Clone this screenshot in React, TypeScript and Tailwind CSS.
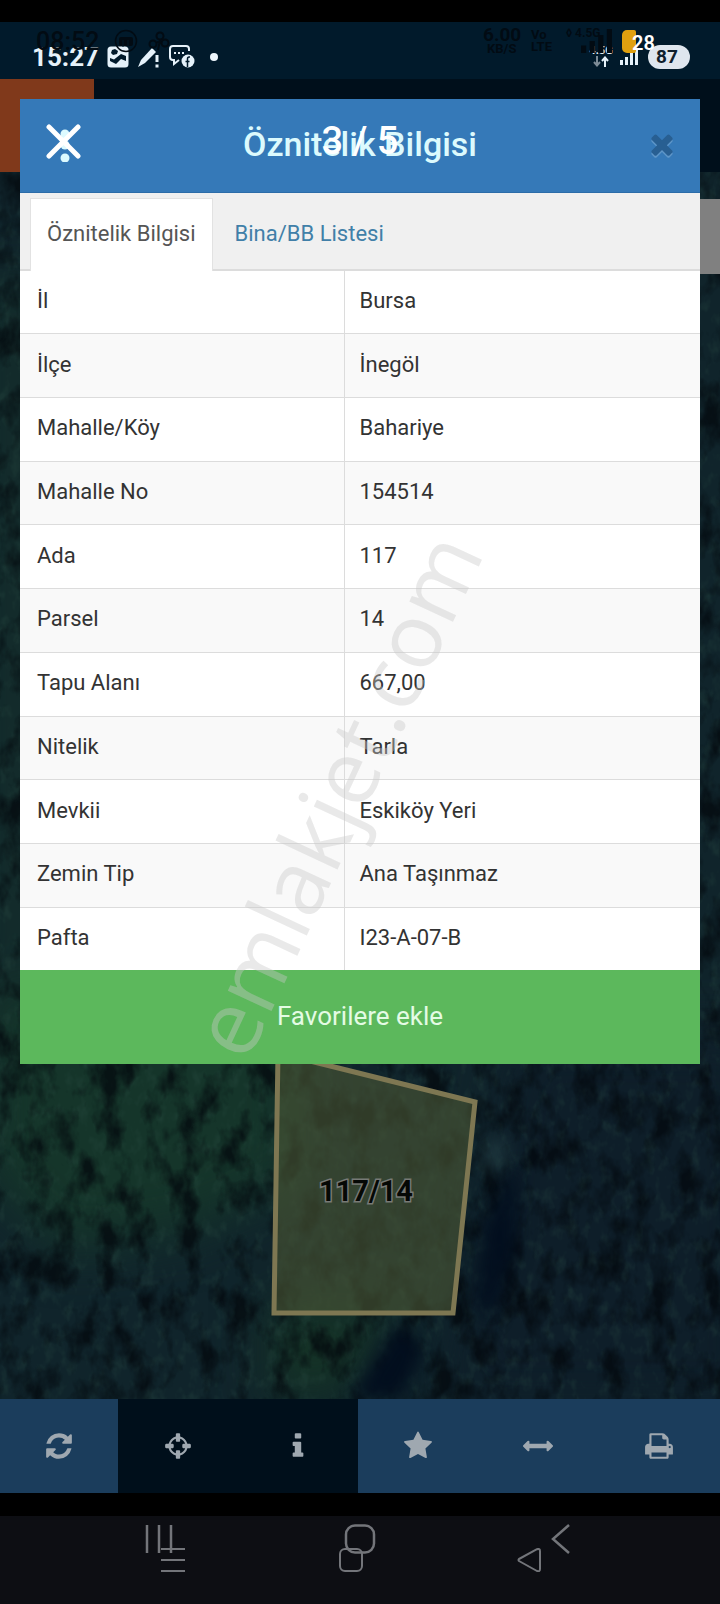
import type { ReactNode } from "react";

const attributes: [string, string][] = [
  ["İl", "Bursa"],
  ["İlçe", "İnegöl"],
  ["Mahalle/Köy", "Bahariye"],
  ["Mahalle No", "154514"],
  ["Ada", "117"],
  ["Parsel", "14"],
  ["Tapu Alanı", "667,00"],
  ["Nitelik", "Tarla"],
  ["Mevkii", "Eskiköy Yeri"],
  ["Zemin Tip", "Ana Taşınmaz"],
  ["Pafta", "I23-A-07-B"],
];

const ICONS = {
  refresh:
    "M1639 1056q0 5-1 7-64 268-268 434.5t-478 166.5q-146 0-282.5-55t-243.5-157l-129 129q-19 19-45 19t-45-19-19-45v-448q0-26 19-45t45-19h448q26 0 45 19t19 45-19 45l-137 137q71 66 161 102t187 36q134 0 250-65t186-179q11-17 53-117 8-23 30-23h192q13 0 22.5 9.5t9.5 22.5zm25-800v448q0 26-19 45t-45 19h-448q-26 0-45-19t-19-45 19-45l138-138q-148-137-349-137-134 0-250 65t-186 179q-11 17-53 117-8 23-30 23h-199q-13 0-22.5-9.5t-9.5-22.5v-7q65-268 270-434.5t480-166.5q146 0 284 55.5t245 156.5l130-129q19-19 45-19t45 19 19 45z",
  crosshairs:
    "M1325 1024h-109q-26 0-45-19t-19-45v-128q0-26 19-45t45-19h109q-32-108-112.5-188.5t-188.5-112.5v109q0 26-19 45t-45 19h-128q-26 0-45-19t-19-45v-109q-108 32-188.5 112.5t-112.5 188.5h109q26 0 45 19t19 45v128q0 26-19 45t-45 19h-109q32 108 112.5 188.5t188.5 112.5v-109q0-26 19-45t45-19h128q26 0 45 19t19 45v109q108-32 188.5-112.5t112.5-188.5zm339-192v128q0 26-19 45t-45 19h-143q-37 161-154.5 278.5t-278.5 154.5v143q0 26-19 45t-45 19h-128q-26 0-45-19t-19-45v-143q-161-37-278.5-154.5t-154.5-278.5h-143q-26 0-45-19t-19-45v-128q0-26 19-45t45-19h143q37-161 154.5-278.5t278.5-154.5v-143q0-26 19-45t45-19h128q26 0 45 19t19 45v143q161 37 278.5 154.5t154.5 278.5h143q26 0 45 19t19 45z",
  info: "M1216 1344v128q0 26-19 45t-45 19h-512q-26 0-45-19t-19-45v-128q0-26 19-45t45-19h64v-384h-64q-26 0-45-19t-19-45v-128q0-26 19-45t45-19h384q26 0 45 19t19 45v576h64q26 0 45 19t19 45zm-128-1152v192q0 26-19 45t-45 19h-256q-26 0-45-19t-19-45v-192q0-26 19-45t45-19h256q26 0 45 19t19 45z",
  star: "M1728 647q0 22-26 48l-363 354 86 500q1 7 1 20 0 21-10.5 35.5t-30.5 14.5q-19 0-40-12l-449-236-449 236q-22 12-40 12-21 0-31.5-14.5t-10.5-35.5q0-6 2-20l86-500-364-354q-25-27-25-48 0-37 56-46l502-73 225-455q19-41 49-41t49 41l225 455 502 73q56 9 56 46z",
  arrows:
    "M1792 896q0 26-19 45l-256 256q-19 19-45 19t-45-19-19-45v-128h-1024v128q0 26-19 45t-45 19-45-19l-256-256q-19-19-19-45t19-45l256-256q19-19 45-19t45 19 19 45v128h1024v-128q0-26 19-45t45-19 45 19l256 256q19 19 19 45z",
  print:
    "M448 1536h896v-256h-896v256zm0-640h896v-384h-160q-40 0-68-28t-28-68v-160h-640v640zm1152 64q0-26-19-45t-45-19-45 19-19 45 19 45 45 19 45-19 19-45zm128 0v416q0 13-9.5 22.5t-22.5 9.5h-224v160q0 40-28 68t-68 28h-960q-40 0-68-28t-28-68v-160h-224q-13 0-22.5-9.5t-9.5-22.5v-416q0-79 56.5-135.5t135.5-56.5h64v-544q0-40 28-68t68-28h672q40 0 88 20t76 48l152 152q28 28 48 76t20 88v256h64q79 0 135.5 56.5t56.5 135.5z",
  times:
    "M1490 1322q0 40-28 68l-136 136q-28 28-68 28t-68-28l-294-294-294 294q-28 28-68 28t-68-28l-136-136q-28-28-28-68t28-68l294-294-294-294q-28-28-28-68t28-68l136-136q28-28 68-28t68 28l294 294 294-294q28-28 68-28t68 28l136 136q28 28 28 68t-28 68l-294 294 294 294q28 28 28 68z",
};

function Icon({ name, className }: { name: keyof typeof ICONS; className: string }) {
  return (
    <svg viewBox="0 0 1792 1792" fill="currentColor" className={className} aria-hidden="true">
      <path d={ICONS[name]} />
    </svg>
  );
}

function SignalBars({ className }: { className: string }) {
  return (
    <svg viewBox="0 0 18 16" fill="currentColor" preserveAspectRatio="none" className={className} aria-hidden="true">
      <rect x="0" y="11" width="3" height="5" />
      <rect x="5" y="8" width="3" height="8" />
      <rect x="10" y="4" width="3" height="12" />
      <rect x="15" y="0" width="3" height="16" />
    </svg>
  );
}

function StatusBar() {
  return (
    <div className="relative h-[57px] bg-[#011a2b]">
      {/* Faded bar of the viewer underneath */}
      <div className="absolute inset-0 flex items-center justify-between pr-[65px] pb-[19px] pl-9 text-[#020b13]">
        <div className="flex items-center">
          <span className="w-[78px] text-[25px] leading-none font-medium">08:52</span>
          <svg viewBox="0 0 24 24" className="size-6" aria-hidden="true">
            <circle cx="12" cy="12" r="10.5" fill="none" stroke="currentColor" strokeWidth="1.5" />
            <rect x="5" y="8" width="14" height="9" rx="2" fill="currentColor" />
            <path d="M9 18v-7M14 18v-7" stroke="#011a2b" strokeWidth="1" />
          </svg>
          <svg viewBox="0 0 22 22" className="ml-2.5 size-[22px]" fill="none" stroke="currentColor" strokeWidth="2" aria-hidden="true">
            <circle cx="12" cy="6" r="3.5" />
            <circle cx="17" cy="13" r="3.5" />
            <circle cx="5" cy="14" r="3.5" />
            <path d="M12 10l-2 10M9 12l5 1" />
          </svg>
        </div>
        <div className="flex items-center">
          <div className="flex w-[48px] flex-col items-start leading-none font-bold">
            <span className="text-[19px] leading-4">6.00</span>
            <span className="pl-1 text-[13px] leading-3">KB/S</span>
          </div>
          <div className="flex w-[35px] flex-col text-[13px] leading-3 font-bold">
            <span>Vo</span>
            <span>LTE</span>
          </div>
          <div className="relative flex h-6 w-[46px] items-end justify-end">
            <span className="absolute -top-0.5 left-0 text-[12px] leading-3 font-bold">◊ 4.5G</span>
            <SignalBars className="h-6 w-[31px]" />
          </div>
          <div className="ml-2.5 flex h-[23px] items-center">
            <span className="h-[23px] w-[14px] rounded-l-[5px] rounded-r-[2px] bg-[#e0a00f]" />
          </div>
          <span className="relative z-10 -ml-1 w-[23px] pt-1 text-[20px] leading-none font-semibold text-white">28</span>
        </div>
      </div>

      <div className="flex h-full items-center justify-between pt-3 pr-[30px] pl-8 text-[#e6f2fa]">
        <div className="flex items-center">
          <span className="w-[75px] text-[26px] leading-none font-bold">15:27</span>
          <svg viewBox="0 0 22 22" className="size-[22px]" aria-hidden="true">
            <rect x="0.5" y="0.5" width="21" height="21" rx="3.5" fill="currentColor" />
            <path d="M5 4l3-1 3 2-1 3-4 1-2-2z" fill="#011a2b" />
            <path d="M3 15v-3l4 1.500 7-5.500 5 2v5l-5-2-5 5z" fill="#011a2b" />
          </svg>
          <svg viewBox="0 0 24 24" className="ml-2 size-6" aria-hidden="true">
            <path d="M1 22l3-7L15 3l4 4L8 18z" fill="currentColor" />
            <path d="M20 10v7M20 19.500v3" stroke="currentColor" strokeWidth="3" />
          </svg>
          <svg viewBox="0 0 26 23" className="ml-2 h-[23px] w-[26px]" aria-hidden="true">
            <path d="M4 1h13q3 0 3 3v2M10 15l-5 4v-4H4q-3 0-3-3V4q0-3 3-3" fill="none" stroke="currentColor" strokeWidth="2" />
            <path d="M5 8h2M9 8h2M13 8h2" stroke="currentColor" strokeWidth="2" />
            <circle cx="19" cy="16" r="6.500" fill="currentColor" />
            <path d="M21 12h-1q-1.500 0-1.500 2v8M16.500 16.500h4" fill="none" stroke="#011a2b" strokeWidth="1.500" />
          </svg>
          <span className="ml-[15px] size-2 rounded-full bg-[#eef7fd]" />
        </div>
        <div className="flex items-center">
          <div className="flex w-[22px] flex-col items-center">
            <span className="text-[11px] leading-[10px] font-bold">4.5G</span>
            <svg viewBox="0 0 16 11" className="h-[11px] w-4" fill="none" strokeWidth="2" aria-hidden="true">
              <path d="M4 0v9M1 6l3 3.500L7 6" stroke="#7d8b96" />
              <path d="M12 11V2M9 5l3-3.500L15 5" stroke="currentColor" />
            </svg>
          </div>
          <SignalBars className="ml-2 h-4 w-[18px]" />
          <span className="ml-2.5 flex h-6 w-[42px] items-center justify-center rounded-full bg-[#dfe6ee] pr-1 text-[19px] leading-none font-bold text-[#10202c]">
            87
          </span>
        </div>
      </div>
    </div>
  );
}

function SatelliteMap() {
  return (
    <svg
      viewBox="0 0 720 1227"
      preserveAspectRatio="xMidYMax slice"
      className="absolute inset-0 size-full"
      role="img"
      aria-label="117/14"
    >
      <defs>
        <filter id="canopy" x="0" y="0" width="100%" height="100%" colorInterpolationFilters="sRGB">
          <feTurbulence type="fractalNoise" baseFrequency="0.04 0.026" numOctaves="4" seed="8" />
          <feColorMatrix values="0 0 0 0 0.01  0 0 0 0 0.03  0 0 0 0 0.05  3 0.6 0 0 -1.65" />
        </filter>
        <filter id="leaves" x="0" y="0" width="100%" height="100%" colorInterpolationFilters="sRGB">
          <feTurbulence type="fractalNoise" baseFrequency="0.09 0.06" numOctaves="3" seed="21" />
          <feColorMatrix values="0 0 0 0 0.18  0 0 0 0 0.32  0 0 0 0 0.28  0 3 0 0 -1.5" />
        </filter>
        <filter id="soft" x="-50%" y="-50%" width="200%" height="200%" colorInterpolationFilters="sRGB">
          <feGaussianBlur stdDeviation="26" />
        </filter>
        <filter id="edge" x="-50%" y="-50%" width="200%" height="200%" colorInterpolationFilters="sRGB">
          <feGaussianBlur stdDeviation="9" />
        </filter>
      </defs>
      <rect width="720" height="1227" fill="#10242b" />
      <g filter="url(#soft)">
        <path d="M0 100h30v900H0z" fill="#17352c" />
        <path d="M-20 820H300V1010L190 1060 60 1080-20 1000z" fill="#15352a" />
        <path d="M270 1130H400L340 1227H270z" fill="#153326" />
        <path d="M510 860H760V1240H440z" fill="#0e1e29" />
      </g>
      <rect width="720" height="1227" filter="url(#leaves)" opacity="0.25" />
      <rect width="720" height="1227" filter="url(#canopy)" opacity="0.75" />
      <path
        d="M520 985L485 1050 475 1130 490 1150 515 1080z M400 1150L350 1227H400L425 1180z"
        fill="#020e1e"
        filter="url(#edge)"
      />
      <path d="M490 965l22 12-20 25-8-10z" fill="#2c4b50" opacity="0.6" filter="url(#edge)" />
      <path d="M274 1141H453L475 930 278 881z" fill="#4c5835" fillOpacity="0.6" stroke="#7e7752" strokeWidth="5" />
      <text
        x="366"
        y="1029"
        textAnchor="middle"
        fontSize="29"
        fontWeight="700"
        fill="#050805"
        stroke="#777a76"
        strokeWidth="3"
        paintOrder="stroke"
      >
        117/14
      </text>
    </svg>
  );
}

function ToolButton({ label, icon, active = false }: { label: string; icon: keyof typeof ICONS; active?: boolean }) {
  return (
    <button
      type="button"
      aria-label={label}
      className={`flex items-center justify-center text-[#9fa8b0] ${active ? "bg-[#000f1b]" : "bg-[#1b3d5c]"}`}
    >
      <Icon name={icon} className="size-[30px]" />
    </button>
  );
}

function NavButton({ label, children }: { label: string; children: ReactNode }) {
  return (
    <button type="button" aria-label={label} className="flex items-center justify-center">
      {children}
    </button>
  );
}

function NavigationBar() {
  return (
    <nav className="grid h-[88px] bg-[#0d0e13] text-[#73757a]">
      <div className="col-start-1 row-start-1 grid grid-cols-3 px-[58px] pb-[42px]">
        <NavButton label="Son uygulamalar">
          <svg viewBox="0 0 28 30" className="h-[30px] w-7" stroke="currentColor" strokeWidth="2.500" aria-hidden="true">
            <path d="M2 1v28M14 1v28M26 1v28" />
          </svg>
        </NavButton>
        <NavButton label="Ana ekran">
          <svg viewBox="0 0 32 30" className="h-[30px] w-8" fill="none" stroke="currentColor" strokeWidth="2.500" aria-hidden="true">
            <rect x="2" y="1.500" width="28" height="27" rx="9" />
          </svg>
        </NavButton>
        <NavButton label="Geri">
          <svg viewBox="0 0 20 30" className="h-[30px] w-5" fill="none" stroke="currentColor" strokeWidth="2.500" aria-hidden="true">
            <path d="M18 1L2 15l16 14" />
          </svg>
        </NavButton>
      </div>
      <div className="pointer-events-none col-start-1 row-start-1 grid grid-cols-3 pr-[102px] pl-[84px]">
        <NavButton label="Menü">
          <svg viewBox="0 0 24 24" className="size-6" stroke="currentColor" strokeWidth="2" aria-hidden="true">
            <path d="M0 1h24M0 12h24M0 23h24" />
          </svg>
        </NavButton>
        <NavButton label="Başlangıç">
          <svg viewBox="0 0 24 24" className="size-6" fill="none" stroke="currentColor" strokeWidth="2" aria-hidden="true">
            <rect x="1" y="1" width="22" height="22" rx="5" />
          </svg>
        </NavButton>
        <NavButton label="Önceki">
          <svg viewBox="0 0 24 24" className="size-6" fill="none" stroke="currentColor" strokeWidth="2" strokeLinejoin="round" aria-hidden="true">
            <path d="M2 11L20 1.200q3-1 3 2V21q0 3-3 2L2 13q-1-1 0-2z" />
          </svg>
        </NavButton>
      </div>
    </nav>
  );
}

function AttributeDialog() {
  return (
    <section role="dialog" aria-label="Öznitelik Bilgisi" className="absolute inset-x-5 top-[99px] bg-white">
      <header className="relative grid h-[94px] grid-cols-[88px_1fr_88px] items-center border-b border-[#2c6ca8] bg-[#3579b8]">
        <button type="button" aria-label="Görüntüleyiciyi kapat" className="flex justify-center pb-2">
          <svg viewBox="0 0 36 40" className="h-10 w-9" aria-hidden="true">
            <g fill="#dcfaff">
              <circle cx="19" cy="12" r="4.500" />
              <circle cx="19" cy="23" r="4.500" />
              <circle cx="19" cy="36" r="4.500" />
            </g>
            <path d="M3 5l29 29M32 5L3 34" stroke="#fff" strokeWidth="5" strokeLinecap="round" />
          </svg>
        </button>
        <h1 className="pb-1 text-center text-[34px] leading-10 font-medium text-[#dcfafd]">Öznitelik Bilgisi</h1>
        <button type="button" aria-label="Kapat" className="flex justify-center pb-1 pl-3 text-[#285f92]">
          <Icon name="times" className="size-8 drop-shadow-[0_2px_0_#5e96c8]" />
        </button>
        <span className="pointer-events-none absolute inset-x-0 top-[22px] text-center text-[38px] leading-10 font-medium text-white">
          3&nbsp;/&nbsp;5
        </span>
      </header>

      <div role="tablist" className="flex h-[78px] items-end border-b-2 border-[#dcdcdc] bg-[#f0f0f0] pl-2.5 text-[22px]">
        <button
          type="button"
          role="tab"
          aria-selected="true"
          className="-mb-0.5 h-[73px] border border-b-0 border-[#e2e2e2] bg-white px-4 pb-1 text-[#555]"
        >
          Öznitelik Bilgisi
        </button>
        <button type="button" role="tab" aria-selected="false" className="h-[71px] px-[22px] text-[#417fa8]">
          Bina/BB Listesi
        </button>
      </div>

      <table className="h-[699px] w-full table-fixed border-collapse text-[22px] leading-7 text-[#333]">
        <colgroup>
          <col className="w-[324px]" />
          <col />
        </colgroup>
        <tbody>
          {attributes.map(([name, value]) => (
            <tr key={name} className="border-b border-[#dcdcdc] even:bg-[#f9f9f9] last:border-b-0">
              <th scope="row" className="border-r border-[#dcdcdc] pb-0.5 pl-[17px] text-left font-normal">
                {name}
              </th>
              <td className="pb-0.5 pl-[15px]">{value}</td>
            </tr>
          ))}
        </tbody>
      </table>

      <button type="button" className="block h-[94px] w-full bg-[#5cb85c] pb-0.5 text-[26px] text-[#e4fbe4]">
        Favorilere ekle
      </button>

      <span
        aria-hidden="true"
        className="pointer-events-none absolute -bottom-1 left-[236px] origin-bottom-left -rotate-65 font-['Open_Sans',sans-serif] text-[90px] leading-none text-[#c8c8c8]/40"
      >
        emlakjet.com
      </span>
    </section>
  );
}

export default function App() {
  return (
    <main className="relative flex min-h-screen flex-col overflow-hidden bg-black pt-[22px] font-[Roboto,sans-serif]">
      <StatusBar />
      <div className="flex h-[93px] bg-[#000f1b]">
        <div className="w-[94px] bg-[#80391b]" />
      </div>
      <div className="relative flex-1">
        <SatelliteMap />
        <div className="absolute top-[27px] right-0 h-[75px] w-10 bg-[#808080]" />
      </div>
      <div className="grid h-[94px] grid-cols-[118fr_120fr_120fr_120fr_120fr_122fr]">
        <ToolButton label="Yenile" icon="refresh" />
        <ToolButton label="Konum" icon="crosshairs" active />
        <ToolButton label="Bilgi" icon="info" active />
        <ToolButton label="Favoriler" icon="star" />
        <ToolButton label="Ölçüm" icon="arrows" />
        <ToolButton label="Yazdır" icon="print" />
      </div>
      <div className="h-[23px]" />
      <NavigationBar />
      <AttributeDialog />
    </main>
  );
}
